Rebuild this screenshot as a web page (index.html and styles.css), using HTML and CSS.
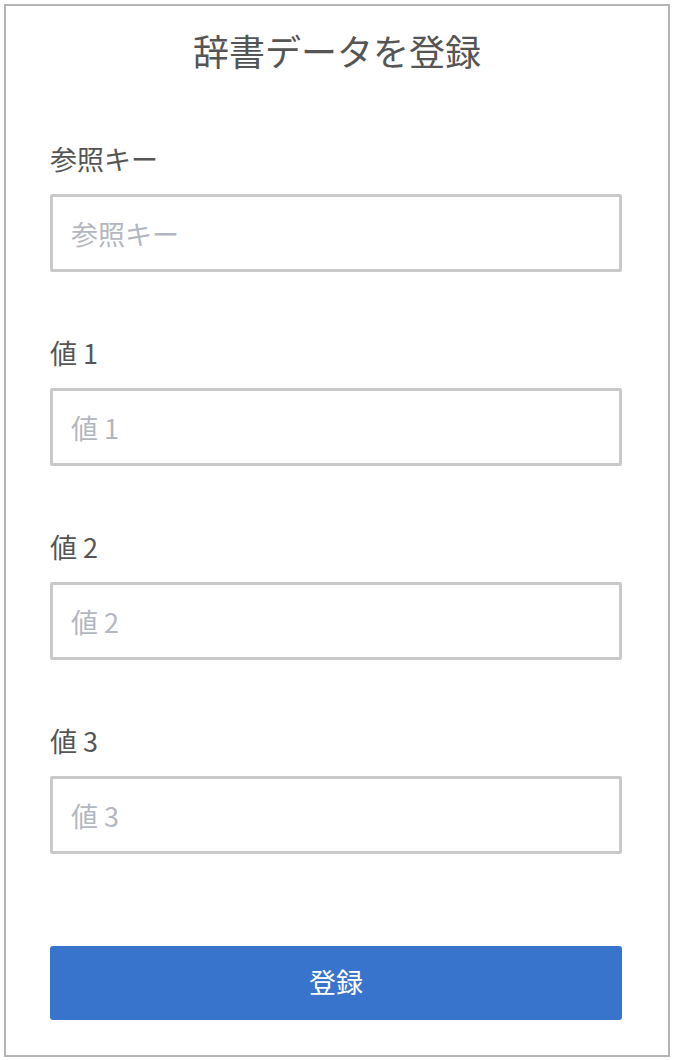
FILE: index.html
```html
<!DOCTYPE html>
<html lang="ja">
<head>
<meta charset="utf-8">
<title>辞書データを登録</title>
<link rel="stylesheet" href="styles.css">
</head>
<body>
<form class="card">
  <h1 class="title">辞書データを登録</h1>
  <div class="field">
    <label class="label">参照キー</label>
    <input class="input" type="text" placeholder="参照キー">
  </div>
  <div class="field">
    <label class="label">値 1</label>
    <input class="input" type="text" placeholder="値 1">
  </div>
  <div class="field">
    <label class="label">値 2</label>
    <input class="input" type="text" placeholder="値 2">
  </div>
  <div class="field">
    <label class="label">値 3</label>
    <input class="input" type="text" placeholder="値 3">
  </div>
  <button class="submit" type="button">登録</button>
</form>
</body>
</html>
```
FILE: styles.css
```css
html, body {
  margin: 0;
  padding: 0;
  background: #ffffff;
}
body {
  font-family: "Noto Sans CJK JP", "Noto Sans", sans-serif;
  color: #555555;
}
.card {
  box-sizing: border-box;
  margin: 4px 0 0 4px;
  width: 666px;
  height: 1053px;
  border: 2px solid #b4b4b4;
  padding: 26px 44px 0 44px;
  display: flex;
  flex-direction: column;
}
.title {
  margin: 0;
  font-size: 36px;
  line-height: 36px;
  font-weight: normal;
  text-align: center;
  color: #555555;
}
.field {
  display: flex;
  flex-direction: column;
  margin-top: 81px;
}
.field + .field {
  margin-top: 71px;
}
.label {
  font-size: 27px;
  line-height: 20px;
  color: #555555;
}
.input {
  box-sizing: border-box;
  margin-top: 25px;
  width: 572px;
  height: 78px;
  border: 3px solid #c9c9c9;
  border-radius: 2px;
  padding: 0 18px;
  font-family: inherit;
  font-size: 27px;
  color: #555555;
  background: #ffffff;
  outline: none;
}
.input::placeholder {
  color: #b3b7bf;
}
.submit {
  margin-top: 92px;
  width: 572px;
  height: 74px;
  border: none;
  border-radius: 3px;
  background: #3874cb;
  color: #ffffff;
  font-family: inherit;
  font-size: 27px;
  padding: 0 0 4px 0;
  cursor: pointer;
}
```
